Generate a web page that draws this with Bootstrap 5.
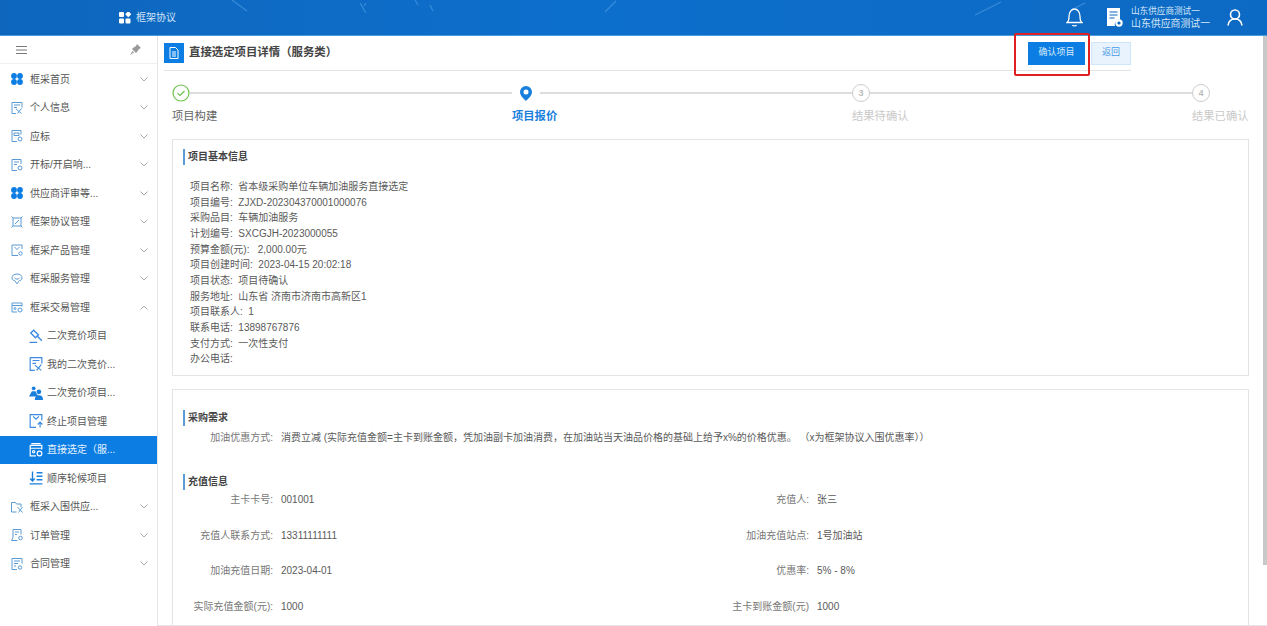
<!DOCTYPE html>
<html>
<head>
  <meta charset="UTF-8">
  <title>直接选定项目详情</title>
  <link href="https://cdn.jsdelivr.net/npm/bootstrap@5.3.0/dist/css/bootstrap.min.css" rel="stylesheet">
  <style>
    html, body { height: 100%; overflow: hidden; }
    body { font-family: "Liberation Sans", "Noto Sans CJK SC", sans-serif; font-size: 10px; color: #606266; background: #fff; }
    .top-bar { height: 36px; background: linear-gradient(90deg, #0e66bd, #0d6fcc 45%, #0d6ac4); border-bottom: 1px solid #4a9be0; color: #fff; }
    .top-streaks { left: 0; top: 0; }
    .top-logo { margin-left: 119px; }
    .top-title { margin-left: 5px; color: #cfe3f7; font-size: 10px; }
    .top-right { margin-right: 24px; }
    .doc-icon { margin-left: 24px; }
    .user-names { margin-left: 8px; width: 84px; line-height: 11.5px; color: #d6e7f8; }
    .user-line-a { font-size: 8.6px; }
    .user-line-b { font-size: 9.9px; }
    .person-icon { margin-left: 12px; }
    .body-wrap { height: 590px; }
    .side { width: 158px; border-right: 1px solid #e6e6e6; flex-shrink: 0; }
    .side-head { height: 28px; padding: 0 16px; border-bottom: 1px solid #f0f0f0; }
    .side-gap { height: 1px; }
    .menu-item { height: 28.5px; padding: 0 9px 0 11px; color: #555; }
    .menu-item > span { margin-left: 7px; flex-grow: 1; }
    .sub-item { padding-left: 29px; }
    .sub-item > span { margin-left: 4px; }
    .menu-on { background: #0b7de3; color: #e8f3fd; }
    .main-area { min-width: 0; padding: 0 18px 0 14px; border-bottom: 1px solid #e4e4e4; }
    .page-head { width: 967px; height: 35px; margin-left: -8px; border-bottom: 1px solid #e4e4e4; }
    .head-icon { width: 20px; height: 20px; background: #0b7de3; }
    .head-title { font-size: 11.4px; font-weight: 700; color: #444; margin-left: 5px; }
    .btn-ok, .btn-ok:hover { display: block; width: 57px; height: 23px; padding: 0; font-size: 9px; background: #0b7de3; color: #dcecfb; border: 0; border-radius: 0; }
    .btn-back, .btn-back:hover { width: 40px; height: 23px; padding: 0; font-size: 9px; background: #e8f3fd; color: #4a9be8; border: 1px solid #cfe5f9; border-radius: 0; margin-left: 6px; }
    .mark-box { width: 76px; height: 43px; border: 2px solid #e02020; border-radius: 2px; top: -9px; left: -14px; }
    .steps { height: 68px; display: grid; grid-template-columns: 340px 340px 340px 57px; padding-top: 13px; }
    .step-track { height: 18px; }
    .step-node { width: 18px; height: 18px; flex-shrink: 0; }
    .pin-node { width: 28px; }
    .step-ring { border: 1px solid #ccc; border-radius: 50%; color: #bbb; font-size: 8.5px; font-weight: 700; }
    .step-line { height: 2px; background: #ddd; flex-grow: 1; }
    .step-name { font-size: 11.3px; color: #c9c9c9; margin-top: 6px; white-space: nowrap; }
    .step-done { color: #666; }
    .step-now { color: #1a7fdc; font-weight: 700; }
    .info-box { border: 1px solid #e4e4e4; }
    .box-one { height: 237px; padding: 9px 10px; }
    .box-two { margin-top: 13px; height: 236px; border-bottom: 0; padding: 20px 10px 0; }
    .sec-title { border-left: 2px solid #5b9bd5; padding-left: 3px; height: 16px; line-height: 16px; font-weight: 700; color: #444; font-size: 10px; }
    .base-list { margin: 14px 0 0 7px; line-height: 15.65px; color: #5a5a5a; }
    .demand-row { line-height: 14px; margin-top: 5px; }
    .label-cell { width: 90px; text-align: right; margin-right: 8px; color: #777; flex-shrink: 0; white-space: nowrap; }
    .value-cell { color: #5a5a5a; white-space: nowrap; }
    .charge-list { margin-top: 2px; }
    .charge-row { height: 35.6px; }
    .charge-col { flex: 0 0 536px; }
    .second-sec { margin-top: 29px; }
    .scroll-thumb { width: 4px; height: 529px; right: 0; top: 36px; background: #c8c8c8; }
  </style>
</head>
<body>
  <!-- 顶部栏 -->
  <div class="top-bar d-flex align-items-center position-relative">
    <svg class="top-streaks position-absolute" width="1267" height="35" viewBox="0 0 1267 35" fill="none" stroke="#5ba6ea" stroke-width="1.200" opacity=".55">
      <path d="M232 0l15 11M360 3l6 10M366 3l-2 3M415 0l3 5M430 5l3 6M605 12l11-11M975 15l26-13M1085 3l-10 5"/>
    </svg>
    <svg class="top-logo position-relative" width="12" height="12" viewBox="0 0 12 12"><g fill="#fff"><rect width="5" height="5" rx="1"/><rect x="7" y="0" width="4.500" height="4.500" rx=".8" transform="rotate(45 9.250 2.250)"/><rect y="6.500" width="5" height="5" rx="1"/><rect x="6.500" y="6.500" width="5" height="5" rx="1"/></g></svg>
    <span class="top-title position-relative">框架协议</span>
    <div class="top-right ms-auto d-flex align-items-center position-relative">
      <svg width="17" height="19" viewBox="0 0 17 19" fill="none" stroke="#fff" stroke-width="1.300"><path d="M1 14.500c1.500-1 2-2.500 2-6C3 4 5.500 1 8.500 1S14 4 14 8.500c0 3.500.5 5 2 6z"/><path d="M6.500 17c.6 1.200 3.400 1.200 4 0"/></svg>
      <svg class="doc-icon" width="16" height="19" viewBox="0 0 16 19"><path fill="#fff" d="M0 0h13v11.500a5 5 0 0 0-5 6.500H0z"/><path stroke="#0b66c0" stroke-width="1.100" d="M2.500 4h8M2.500 7h8M2.500 10h5"/><circle cx="12" cy="15" r="3.700" fill="#fff"/><circle cx="12" cy="15" r="1.600" fill="#0b66c0"/></svg>
      <div class="user-names"><div class="user-line-a">山东供应商测试一</div><div class="user-line-b">山东供应商测试一</div></div>
      <svg class="person-icon" width="16" height="17" viewBox="0 0 16 17" fill="none" stroke="#fff" stroke-width="1.600"><circle cx="8" cy="5.500" r="4.500"/><path d="M1 16.500c.5-4 3-6.500 7-6.500s6.500 2.500 7 6.500"/></svg>
    </div>
  </div>

  <div class="body-wrap d-flex">
    <!-- 左侧菜单 -->
    <div class="side" id="sideMenu"></div>

    <div class="main-area flex-grow-1">
      <div class="page-head d-flex align-items-center">
        <div class="head-icon d-flex align-items-center justify-content-center">
          <svg width="10" height="12" viewBox="0 0 10 12" fill="none" stroke="#fff"><path d="M1 .5h5.500L9 3v8.500H1z"/><path d="M3 5h4M3 7h4M3 9h4"/></svg>
        </div>
        <span class="head-title">直接选定项目详情（服务类）</span>
        <div class="ms-auto d-flex">
          <div class="position-relative">
            <button class="btn btn-ok">确认项目</button>
            <div class="mark-box position-absolute"></div>
          </div>
          <button class="btn btn-back">返回</button>
        </div>
      </div>

      <!-- 步骤条 -->
      <div class="steps">
        <div>
          <div class="step-track d-flex align-items-center">
            <div class="step-node">
              <svg width="18" height="18" viewBox="0 0 18 18" fill="none"><circle cx="9" cy="9" r="8" stroke="#6cc24a" stroke-width="1.200"/><path d="M5.500 9.200l2.500 2.300 4.500-4.500" stroke="#6cc24a" stroke-width="1.200"/></svg>
            </div>
            <div class="step-line"></div>
          </div>
          <div class="step-name step-done">项目构建</div>
        </div>
        <div>
          <div class="step-track d-flex align-items-center">
            <div class="step-node pin-node d-flex justify-content-center">
              <svg width="18" height="18" viewBox="0 0 18 18"><path fill="#1a7fdc" fill-rule="evenodd" d="M9 2a6 6 0 0 1 6 6c0 3.500-3.500 6.500-6 9-2.500-2.500-6-5.500-6-9a6 6 0 0 1 6-6zm0 3.500a2.500 2.500 0 1 0 0 5 2.500 2.500 0 0 0 0-5z"/></svg>
            </div>
            <div class="step-line"></div>
          </div>
          <div class="step-name step-now">项目报价</div>
        </div>
        <div>
          <div class="step-track d-flex align-items-center">
            <div class="step-node step-ring d-flex align-items-center justify-content-center">3</div>
            <div class="step-line"></div>
          </div>
          <div class="step-name">结果待确认</div>
        </div>
        <div>
          <div class="step-track d-flex align-items-center">
            <div class="step-node step-ring d-flex align-items-center justify-content-center">4</div>
          </div>
          <div class="step-name">结果已确认</div>
        </div>
      </div>

      <!-- 项目基本信息 -->
      <div class="info-box box-one">
        <div class="sec-title">项目基本信息</div>
        <div class="base-list">
          <div>项目名称:&nbsp; 省本级采购单位车辆加油服务直接选定</div>
          <div>项目编号:&nbsp; ZJXD-202304370001000076</div>
          <div>采购品目:&nbsp; 车辆加油服务</div>
          <div>计划编号:&nbsp; SXCGJH-2023000055</div>
          <div>预算金额(元):&nbsp;&nbsp; 2,000.00元</div>
          <div>项目创建时间:&nbsp; 2023-04-15 20:02:18</div>
          <div>项目状态:&nbsp; 项目待确认</div>
          <div>服务地址:&nbsp; 山东省 济南市济南市高新区1</div>
          <div>项目联系人:&nbsp; 1</div>
          <div>联系电话:&nbsp; 13898767876</div>
          <div>支付方式:&nbsp; 一次性支付</div>
          <div>办公电话:</div>
        </div>
      </div>

      <!-- 采购需求 / 充值信息 -->
      <div class="info-box box-two">
        <div class="sec-title">采购需求</div>
        <div class="demand-row d-flex">
          <div class="label-cell">加油优惠方式:</div>
          <div class="value-cell">消费立减 (实际充值金额=主卡到账金额，凭加油副卡加油消费，在加油站当天油品价格的基础上给予x%的价格优惠。 （x为框架协议入围优惠率））</div>
        </div>
        <div class="sec-title second-sec">充值信息</div>
        <div class="charge-list" id="chargeRows"></div>
      </div>
    </div>
  </div>
  <div class="scroll-thumb position-absolute"></div>

  <script>
    const ln = '#5b9bd5';
    const dots = `<svg width="12" height="12" viewBox="0 0 12 12" fill="#0b7de3"><circle cx="3" cy="3" r="2.900"/><circle cx="9" cy="3" r="2.900"/><circle cx="3" cy="9" r="2.900"/><circle cx="9" cy="9" r="2.900"/></svg>`;
    const draw = (body, c = ln, w = 12, h = 12) => `<svg width="${w}" height="${h}" viewBox="0 0 12 12" fill="none" stroke="${c}">${body}</svg>`;
    // 每个菜单自己的图标
    const icons = {
      person: draw('<path d="M1 .5h10v5M1 .5v11h4"/><path d="M3 3h6M3 5.500h3"/><path d="M5 7l5.500 4.500M10.500 6.500L6.500 11.500"/>'),
      bid: draw('<path d="M1 .5h9v4M1 .5v11h5"/><path d="M5 3h3v2.500H3V3z"/><circle cx="9" cy="9" r="2"/>'),
      open: draw('<path d="M1 .5h9v4.500M1 .5v11h5"/><path d="M3 3h5M3 5.500h3"/><circle cx="9" cy="9" r="2"/>'),
      frame: draw('<path d="M2 2h8v8H2zM2 2L.5.500M10 2l1.500-1.500M2 10L.5 11.500M10 10l1.500 1.500"/><path d="M4 8l4-4"/>'),
      product: draw('<path d="M11 5V1H1v10.500h6"/><path d="M3.500 3l2.500 2.500L8.500 3"/><circle cx="9.500" cy="9.500" r="1.700"/>'),
      service: draw('<path d="M1 5c0-2.500 2-4 5-4s5 1.500 5 4-2 2.500-2.500 2.500S6 11 6 11 4 7.500 3.500 7.500 1 7.500 1 5z"/><path d="M3.500 5c1.500 1.500 3.500 1.500 5 0"/>'),
      trade: draw('<path d="M1 2h10v3.500M1 2v9h5M1 4.500h10"/><circle cx="9" cy="9" r="2"/><circle cx="4" cy="7.500" r="1"/>'),
      shortlist: draw('<path d="M.5 1.500h4l1 1.500h4.500v3M.5 1.500V11h5"/><path d="M6.500 6l5 5.500M11.500 6l-4 5.500"/>'),
      order: draw('<path d="M2 .5h8v5M2 .5v8L.5 11.500h6"/><path d="M4 3h4M4 5.500h2"/><circle cx="9.500" cy="9" r="1.800"/>'),
      contract: draw('<path d="M1 .5h10v5M1 .5v11h5"/><path d="M3 3h6M3 5.500h4M3 8h2"/><circle cx="9" cy="9.500" r="1.700"/>'),
      hammer: draw('<path d="M4 1l4 4-2.500 2.500-4-4zM7 6l4 4M.5 11.500h6.500" stroke-width="1.200"/>', '#3d8ae0', 14, 14),
      mine: draw('<path d="M1 .5h10v5M1 .5v11h4"/><path d="M3 3h6M3 5.500h3"/><path d="M5 7l5.500 4.500M10.500 6.500L6.500 11.500"/>', '#3d8ae0', 14, 14),
      people: `<svg width="14" height="14" viewBox="0 0 12 12" fill="#1a7fdc"><circle cx="4" cy="2" r="1.600"/><path d="M0 9l2.500-4.500h3L8 9z"/><circle cx="8.500" cy="5" r="2"/><path d="M5 12c0-3 1.500-4 3.500-4s3.500 1 3.500 4z"/></svg>`,
      stop: draw('<path d="M6 11.500H1V.5h10v5"/><path d="M3.500 2l2.500 2.500L8.500 2M9.500 11.500V7M7.500 9l2-2 2 2"/>', '#3d8ae0', 14, 14),
      direct: draw('<path d="M1 2h10v3.500M1 2v9h5M1 4.500h10M2 .5h8"/><circle cx="9" cy="9" r="2"/><circle cx="4" cy="7.500" r="1"/>', '#fff', 14, 14),
      queue: draw('<path d="M3 .5v8M1 6.500l2 2 2-2M6.500 1.500h5M6.500 4.500h5M6.500 7.500h5M.5 11h11" stroke-width="1.200"/>', '#1a7fdc', 14, 14)
    };
    const menus = [
      ['框采首页', dots, 'down'], ['个人信息', icons.person, 'down'], ['应标', icons.bid, 'down'],
      ['开标/开启响...', icons.open, 'down'], ['供应商评审等...', dots, 'down'], ['框架协议管理', icons.frame, 'down'],
      ['框采产品管理', icons.product, 'down'], ['框采服务管理', icons.service, 'down'], ['框采交易管理', icons.trade, 'up'],
      ['二次竞价项目', icons.hammer, 'sub'], ['我的二次竞价...', icons.mine, 'sub'], ['二次竞价项目...', icons.people, 'sub'],
      ['终止项目管理', icons.stop, 'sub'], ['直接选定（服...', icons.direct, 'on'], ['顺序轮候项目', icons.queue, 'sub'],
      ['框采入围供应...', icons.shortlist, 'down'], ['订单管理', icons.order, 'down'], ['合同管理', icons.contract, 'down']
    ];
    const chevron = (d) => `<svg width="8" height="5" viewBox="0 0 8 5" fill="none" stroke="#aaa"><path d="${d}"/></svg>`;
    let html = `<div class="side-head d-flex align-items-center justify-content-between">
      <svg width="11" height="8" viewBox="0 0 11 8" stroke="#777"><path d="M0 .5h11M0 4h11M0 7.500h11"/></svg>
      <svg width="11" height="11" viewBox="0 0 11 11" fill="#999"><path d="M7 0l4 4-2 1-2 3-1 1-4-4 1-1 3-2zM2.500 7L0 11l4-2.500z"/></svg>
    </div><div class="side-gap"></div>`;
    menus.forEach(m => {
      const sub = m[2] === 'sub' || m[2] === 'on';
      const right = m[2] === 'down' ? chevron('M.5.5L4 4 7.500.5') : m[2] === 'up' ? chevron('M.5 4.500L4 1l3.500 3.500') : '';
      html += `<div class="menu-item d-flex align-items-center ${sub ? 'sub-item' : ''} ${m[2] === 'on' ? 'menu-on' : ''}">${m[1]}<span>${m[0]}</span>${right}</div>`;
    });
    document.getElementById('sideMenu').innerHTML = html;

    const rows = [
      ['主卡卡号:', '001001', '充值人:', '张三'],
      ['充值人联系方式:', '13311111111', '加油充值站点:', '1号加油站'],
      ['加油充值日期:', '2023-04-01', '优惠率:', '5% - 8%'],
      ['实际充值金额(元):', '1000', '主卡到账金额(元)', '1000']
    ];
    document.getElementById('chargeRows').innerHTML = rows.map(r => `<div class="charge-row d-flex">
      <div class="charge-col d-flex"><div class="label-cell">${r[0]}</div><div class="value-cell">${r[1]}</div></div>
      <div class="charge-col d-flex"><div class="label-cell">${r[2]}</div><div class="value-cell">${r[3]}</div></div>
    </div>`).join('');
  </script>
  <script src="https://cdn.jsdelivr.net/npm/bootstrap@5.3.0/dist/js/bootstrap.bundle.min.js"></script>
</body>
</html>
